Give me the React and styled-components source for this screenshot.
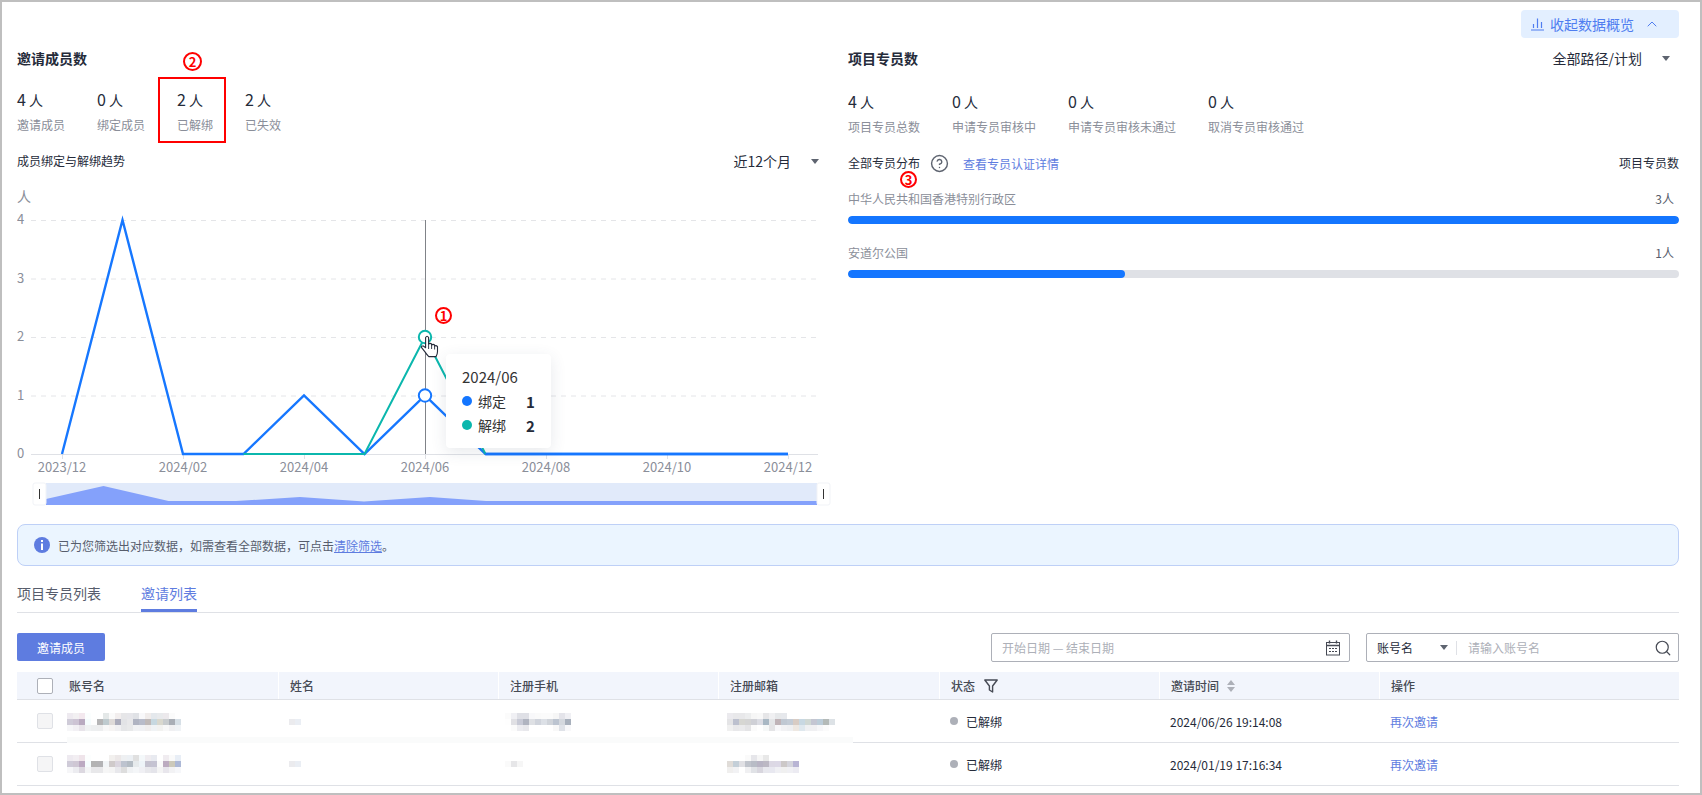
import React from "react";
import styled, { createGlobalStyle } from "styled-components";
import { ChevronUp, CircleHelp, Search } from "lucide-react";

const GlobalStyle = createGlobalStyle`
  html, body {
    margin: 0;
    padding: 0;
    background: #fff;
  }
  body {
    font-family: "Noto Sans CJK SC", "Liberation Sans", sans-serif;
    font-size: 12px;
    color: #252b3a;
  }
  * {
    box-sizing: border-box;
  }
`;

const Frame = styled.div`
  position: relative;
  width: 1702px;
  height: 795px;
  overflow: hidden;
  border: 2px solid #bfbfbf;
  padding: 8px 21px 0 15px;
  background: #fff;
`;

const TopBar = styled.div`
  display: flex;
  justify-content: flex-end;
`;

const CollapseButton = styled.button`
  display: flex;
  align-items: center;
  width: 158px;
  height: 28px;
  padding: 0 0 0 10px;
  border: 0;
  border-radius: 4px;
  background: #e3efff;
  color: #4f7df0;
  font: inherit;
  font-size: 14px;
  svg:first-child {
    margin-right: 6px;
  }
  svg:last-child {
    margin-left: 10px;
  }
`;

const Overview = styled.div`
  display: grid;
  grid-template-columns: 814px 831px;
  column-gap: 17px;
  margin-top: 9px;
  height: 463px;
`;

const Column = styled.section`
  min-width: 0;
`;

const HeadRow = styled.div`
  display: flex;
  justify-content: space-between;
  align-items: center;
  height: ${(p) => p.$h || 22}px;
  margin-top: ${(p) => p.$mt || 0}px;
`;

const Title = styled.h2`
  margin: 0;
  font-size: 14px;
  font-weight: 700;
  line-height: 22px;
  color: #252b3a;
`;

const SubTitle = styled.span`
  font-size: 12px;
  line-height: 18px;
  color: #252b3a;
`;

const Dropdown = styled.div`
  display: flex;
  align-items: center;
  padding-right: ${(p) => p.$pr}px;
  font-size: 14px;
  color: #252b3a;
`;

const Caret = styled.i`
  display: block;
  width: 0;
  height: 0;
  margin-left: ${(p) => p.$ml || 0}px;
  border-left: 4px solid transparent;
  border-right: 4px solid transparent;
  border-top: 5px solid #5e6470;
`;

const Stats = styled.div`
  display: flex;
  gap: 32px;
  margin-top: ${(p) => p.$mt}px;
`;

const Stat = styled.div`
  display: flex;
  flex-direction: column;
  gap: 5px;
`;

const StatValue = styled.div`
  display: flex;
  align-items: baseline;
  gap: 3px;
  height: 24px;
  line-height: 24px;
  font-size: 16px;
  color: #252b3a;
  span {
    font-size: 14px;
  }
`;

const StatLabel = styled.div`
  font-size: 12px;
  line-height: 18px;
  color: #8a8e99;
`;

const ChartWrap = styled.div`
  position: relative;
  width: 814px;
  height: 324px;
  margin-top: 16px;
  svg {
    display: block;
  }
`;

const Tip = styled.div`
  position: absolute;
  left: 429px;
  top: 168px;
  width: 105px;
  height: 94px;
  padding: 12px 0 0 16px;
  border-radius: 4px;
  background: #fff;
  box-shadow: 0 4px 16px rgba(60, 70, 100, 0.12);
  color: #333;
`;

const TipTitle = styled.div`
  font-size: 15px;
  line-height: 22px;
  margin-bottom: 1px;
`;

const TipRow = styled.div`
  display: flex;
  align-items: center;
  height: 24px;
  font-size: 14px;
  b {
    margin-left: 20px;
    font-size: 15px;
    font-weight: 700;
    color: #252b3a;
  }
`;

const Dot = styled.i`
  display: block;
  width: ${(p) => p.$size}px;
  height: ${(p) => p.$size}px;
  margin-right: ${(p) => p.$mr}px;
  border-radius: 50%;
  background: ${(p) => p.$color};
`;

const DistHead = styled.div`
  display: flex;
  align-items: center;
  justify-content: space-between;
  height: 18px;
  margin-top: 18px;
`;

const DistLeft = styled.div`
  display: flex;
  align-items: center;
  svg {
    margin: 0 14px 0 10px;
    color: #5e6470;
  }
`;

const TextLink = styled.a`
  font-size: 12px;
  color: #5e7ce0;
  text-decoration: none;
`;

const BarHead = styled.div`
  display: flex;
  justify-content: space-between;
  height: 18px;
  line-height: 18px;
  padding-right: 5px;
  margin-top: ${(p) => p.$mt}px;
  color: #8a8e99;
  span:last-child {
    color: #575d6c;
  }
`;

const Track = styled.div`
  height: 8px;
  margin-top: 8px;
  border-radius: 4px;
  overflow: hidden;
  background: #dfe1e6;
`;

const Fill = styled.div`
  height: 100%;
  border-radius: 4px;
  background: #1476ff;
`;

const Alert = styled.div`
  display: flex;
  align-items: center;
  height: 42px;
  margin-top: 14px;
  padding-left: 16px;
  border: 1px solid #bed0f7;
  border-radius: 8px;
  background: #ebf5ff;
  color: #575d6c;
  svg {
    margin-right: 8px;
  }
  a {
    color: #5e7ce0;
    text-decoration: underline;
  }
`;

const Tabs = styled.div`
  display: flex;
  gap: 40px;
  margin-top: 16px;
  border-bottom: 1px solid #dfe1e6;
`;

const Tab = styled.div`
  height: 30px;
  font-size: 14px;
  line-height: 22px;
  color: ${(p) => (p.$active ? "#5e7ce0" : "#575d6c")};
  border-bottom: 3px solid ${(p) => (p.$active ? "#5e7ce0" : "transparent")};
`;

const Toolbar = styled.div`
  display: flex;
  align-items: flex-start;
  height: 29px;
  margin-top: 20px;
`;

const PrimaryButton = styled.button`
  width: 88px;
  height: 28px;
  margin-right: auto;
  padding: 0;
  border: 0;
  border-radius: 2px;
  background: #5e7ce0;
  color: #fff;
  font: inherit;
  font-size: 12px;
`;

const Field = styled.div`
  display: flex;
  align-items: center;
  width: ${(p) => p.$w}px;
  height: 29px;
  margin-left: ${(p) => p.$ml || 0}px;
  padding: 0 8px 0 10px;
  border: 1px solid #adb0b8;
  border-radius: 2px;
  color: #adb0b8;
`;

const FieldText = styled.span`
  flex: ${(p) => (p.$grow ? 1 : "none")};
`;

const AccountSelect = styled.span`
  display: flex;
  align-items: center;
  width: 71px;
  color: #252b3a;
`;

const FieldDivider = styled.i`
  display: block;
  width: 1px;
  height: 14px;
  margin: 0 11px 0 8px;
  background: #dfe1e6;
`;

const SearchIcon = styled(Search)`
  margin-right: -2px;
  color: #464a54;
`;

const Table = styled.div`
  position: relative;
  margin-top: 10px;
`;

const Row = styled.div`
  display: grid;
  grid-template-columns: 261px 220px 220px 221px 220px 220px 300px;
  height: ${(p) => (p.$head ? 28 : 43)}px;
  border-bottom: 1px solid #dfe1e6;
  background: ${(p) => (p.$head ? "#f2f5fc" : "#fff")};
  color: ${(p) => (p.$head ? "#464a54" : "#252b3a")};
  font-weight: ${(p) => (p.$head ? 500 : 400)};
`;

const Cell = styled.div`
  display: flex;
  align-items: center;
  min-width: 0;
  padding-left: ${(p) => (p.$first ? 20 : 11)}px;
  border-left: ${(p) => (p.$head && !p.$first ? "1px solid #fff" : "0")};
`;

const Check = styled.i`
  display: block;
  flex: none;
  width: 16px;
  height: 16px;
  margin-right: 16px;
  border: 1px solid ${(p) => (p.$off ? "#dfe1e6" : "#adb0b8")};
  border-radius: 2px;
  background: ${(p) => (p.$off ? "#f5f5f6" : "#fff")};
`;

const Blur = styled.svg`
  display: block;
  flex: none;
  margin-left: ${(p) => p.$shift || 0}px;
  margin-top: ${(p) => (p.$low ? 2 : 0)}px;
`;

const HeadIcon = styled.svg`
  margin-left: ${(p) => p.$ml}px;
`;

const StatusDot = styled.i`
  display: block;
  width: 8px;
  height: 8px;
  margin-right: 8px;
  border-radius: 50%;
  background: #adb0b8;
`;

const ActionLink = styled.a`
  color: #5e7ce0;
  text-decoration: none;
`;

const Smear = styled.div`
  position: absolute;
  left: 50px;
  top: 65px;
  width: 786px;
  height: 6px;
  background: #fafbfb;
`;

const RedBox = styled.div`
  position: absolute;
  left: 156px;
  top: 75px;
  width: 68px;
  height: 66px;
  border: 2px solid #f00;
`;

const Mark = styled.span`
  position: absolute;
  left: ${(p) => p.$x}px;
  top: ${(p) => p.$y}px;
  display: flex;
  align-items: center;
  justify-content: center;
  width: ${(p) => p.$d}px;
  height: ${(p) => p.$d}px;
  border: 2px solid #f00;
  border-radius: 50%;
  color: #f00;
  font-size: 13px;
  font-weight: 700;
  line-height: 1;
`;

const xAt = (m) => 62 + m * 60.5;
const yAt = (v) => 454 - v * 58.5;
const toPoints = (vals, from = 0) =>
  vals.map((v, i) => `${xAt(i + from)},${yAt(v)}`).join(" ");

const bound = [0, 4, 0, 0, 1, 0, 1, 0, 0, 0, 0, 0, 0];
const unbound = [0, 0, 0, 2, 0];

function TrendChart() {
  return (
    <svg width="814" height="324" viewBox="17 186 814 324" fontFamily='"Noto Sans CJK SC", sans-serif'>
      <text x="17" y="202" fontSize="14" fill="#8a8e99">人</text>
      {[0, 1, 2, 3, 4].map((v) => (
        <g key={v}>
          <text x="17" y={yAt(v) + 4} fontSize="13" fill="#8a8e99">{v}</text>
          {v > 0 && (
            <line x1="31" x2="818" y1={yAt(v) + 0.5} y2={yAt(v) + 0.5} stroke="#e4e5e8" strokeDasharray="5 5" />
          )}
        </g>
      ))}
      <line x1="31" x2="818" y1="454.5" y2="454.5" stroke="#dfe1e6" />
      {[0, 2, 4, 6, 8, 10, 12].map((m, i) => (
        <g key={m}>
          <line x1={xAt(m) + 0.5} x2={xAt(m) + 0.5} y1="454" y2="459" stroke="#dfe1e6" />
          <text x={xAt(m)} y="472" fontSize="13" fill="#8a8e99" textAnchor="middle">
            {["2023/12", "2024/02", "2024/04", "2024/06", "2024/08", "2024/10", "2024/12"][i]}
          </text>
        </g>
      ))}
      <line x1="425.5" x2="425.5" y1="220" y2="454" stroke="#808388" />
      <polyline points={toPoints(bound)} fill="none" stroke="#1677ff" strokeWidth="2.4" strokeLinejoin="miter" />
      <polyline points={toPoints(unbound, 3)} fill="none" stroke="#0bb7ad" strokeWidth="2" />
      <polyline points={toPoints(bound.slice(7), 7)} fill="none" stroke="#1677ff" strokeWidth="2.6" />
      <circle cx="425" cy="337" r="6.2" fill="#fff" stroke="#0bb7ad" strokeWidth="2" />
      <circle cx="425" cy="395.5" r="6.2" fill="#fff" stroke="#1677ff" strokeWidth="2" />

      <rect x="46" y="483" width="771" height="22" fill="#e1eafa" />
      <polygon points="46,499 103.5,486 168.5,501 236,501 300,497 364,501.5 430,497 486,501 817,501 817,505 46,505" fill="#84a1fb" />
      <rect x="33" y="483" width="13" height="22" rx="2" fill="#fff" stroke="#f1f3f7" />
      <rect x="39" y="489" width="1" height="10" fill="#333" />
      <rect x="817" y="483" width="13" height="22" rx="2" fill="#fff" stroke="#f1f3f7" />
      <rect x="823" y="489" width="1" height="10" fill="#333" />

      <path
        d="M425.6 337.5q1.5-2.6 3 0v6.5q1.5-1.2 3 0v1q1.5-1.2 3 0v1q1.6-1 2.9.6v5q0 2.8-1.5 5h-7.2q-2-2-4-5l-3.2-4q-.5-2.2 2-1.5l2 1.6z"
        fill="#fff"
        stroke="#252b3a"
        strokeWidth="1.1"
        strokeLinejoin="round"
      />
      <path d="M428.6 344v5M431.6 345v4M434.6 346v3.5" stroke="#252b3a" strokeWidth="0.9" fill="none" />
    </svg>
  );
}

const BarChartIcon = () => (
  <svg width="13" height="14" viewBox="0 0 13 14" fill="none" stroke="#4f7df0" strokeWidth="1.2">
    <path d="M0 13h13M2.5 11V7M6.5 11V1.5M10.5 11V5" />
  </svg>
);

const InfoIcon = () => (
  <svg width="16" height="16" viewBox="0 0 16 16">
    <circle cx="8" cy="8" r="8" fill="#5e7ce0" />
    <rect x="7" y="3" width="2" height="2" fill="#fff" />
    <rect x="7" y="6.5" width="2" height="6.5" fill="#fff" />
  </svg>
);

const CalendarIcon = () => (
  <svg width="16" height="16" viewBox="0 0 16 16" fill="none" stroke="#464a54">
    <rect x="1.5" y="2.5" width="13" height="12.5" />
    <path d="M1.5 5.5h13M4.5 0.5v3M11.5 0.5v3" strokeWidth="1.4" />
    <path d="M4 8.5h2M7 8.5h2M10 8.5h2M4 11.5h2M7 11.5h2M10 11.5h2" strokeWidth="1.2" />
  </svg>
);

const FilterIcon = () => (
  <HeadIcon $ml={9} width="14" height="14" viewBox="0 0 14 14" fill="none" stroke="#464a54" strokeWidth="1.4">
    <path d="M0.8 1h12.4L8.6 7v6L5.4 11V7z" strokeLinejoin="round" />
  </HeadIcon>
);

const SortIcon = () => (
  <HeadIcon $ml={8} width="8" height="12" viewBox="0 0 8 12" fill="#adb0b8">
    <path d="M4 0l4 5H0zM4 12L0 7h8z" />
  </HeadIcon>
);

function Mosaic({ rows, shift, low }) {
  const w = rows[0].length * 6;
  return (
    <Blur $shift={shift} $low={low} width={w} height={rows.length * 6}>
      {rows.flatMap((row, r) =>
        row.map((c, i) => <rect key={`${r}-${i}`} x={i * 6} y={r * 6} width="6" height="6" fill={c} />)
      )}
    </Blur>
  );
}

const name1 = [
  ["#eeeaf0", "#f2f0f2", "#f3e8ee", "#fbfefe", "#fff", "#fff", "#e4e8e8", "#fafafa", "#f2eeee", "#e6e6e8", "#e6e6ea", "#e0e2e6", "#f8f8fa", "#f0eceb", "#e4e8ec", "#e8eaec", "#ece9ec", "#fbfbfb", "#fff"],
  ["#cfcbd8", "#cdc4d4", "#b9aac0", "#f5fcfd", "#fefefe", "#b5b5b6", "#bfcbcf", "#dedad8", "#abacbb", "#e2e3e6", "#e8e8ea", "#b0b4c2", "#b8bcca", "#bfb9b8", "#c7d8e0", "#d9d8ce", "#c8ccce", "#a9aeb6", "#d6dfe6"],
  ["#f6f6f8", "#f2f0f4", "#e8e4ea", "#f0f2f3", "#edeff0", "#edeeef", "#f8f8f8", "#f6f4f3", "#f0f0f2", "#e5e6e8", "#e8e9ea", "#f1f2f4", "#f0f1f4", "#f0eeee", "#f0f3f5", "#f2f2f0", "#f8f8f8", "#f0f0f2", "#f0f3f6"],
];
const name2 = [
  ["#eeeaf0", "#f2eef2", "#efe4ea", "#fcfefe", "#fff", "#fff", "#fff", "#f2f0ee", "#ece8e8", "#eef0f2", "#ecf0f4", "#e0e0e0", "#f4f8fa", "#efecf0", "#e8eaf0", "#fff", "#f0ecf0", "#fafafa", "#e8eef6"],
  ["#cfcbd8", "#cfc7d4", "#bcaac2", "#f6fdfe", "#b3b3b3", "#b3b3b5", "#f2f5f7", "#cfcaca", "#dad5de", "#bdc3cf", "#b4bcc4", "#e6eaec", "#eef4f8", "#c4c2cf", "#c5c3d2", "#fafafa", "#bcabc0", "#ccc9ba", "#acb8d6"],
  ["#f6f6f8", "#ececf0", "#dcd8e0", "#f4f5f6", "#e8e8ea", "#e8e8ea", "#f6f6f6", "#f4f4f4", "#e8e8ec", "#ddd", "#f0f2f4", "#f4f6f8", "#f0f0f4", "#e8e8ec", "#e4e4ea", "#f4f4f4", "#e8e6ec", "#f2f2f4", "#f6f7fa"],
];
const phone1 = [
  ["#fbfbfb", "#f0f0f4", "#dfe0e6", "#dfe0e6", "#f8f8fa", "#fafafa", "#fbfbfb", "#fbfbfb", "#f6f6f6", "#e4e4ea", "#f0f0f4"],
  ["#fefefe", "#e0e0e4", "#c8cad6", "#b0b4c0", "#dee0e4", "#d0d4dc", "#dce0e6", "#d0d4da", "#bcc4d0", "#d4d8de", "#a8b0bc"],
  ["#fff", "#fbfbfb", "#ececf0", "#e8e8ec", "#fff", "#fff", "#fff", "#fff", "#f8f8f8", "#dfe2e8", "#f8f8fa"],
];
const phone2 = [["#fafafa", "#e6e6e8", "#f6f6f6"]];
const email1 = [
  ["#ebeaee", "#e8e8ea", "#e8e8ea", "#ecedee", "#f6f6f6", "#f8f8f8", "#e6e6e8", "#f0f0f2", "#e6e8ea", "#e6e8ec", "#fff", "#fff", "#fff", "#fff", "#fff", "#fff", "#fff", "#fff"],
  ["#e4e4e6", "#bcc0ce", "#d6d6d2", "#d4d4d4", "#cfd0d6", "#dcdde4", "#a9b8c4", "#e4e6e8", "#c0b4b8", "#c0c8d2", "#c4ccd6", "#d8ccc4", "#c8d8e2", "#d0d8d4", "#c4c6d2", "#bcccd8", "#b4bab8", "#dde2e6"],
  ["#f0f0f0", "#e8e8ea", "#eaeaec", "#e4e4e6", "#fbfbfb", "#fff", "#f6f8f8", "#e4e4e6", "#f8f8fa", "#f2f2f4", "#eff0f2", "#eee8e2", "#dfe8ee", "#eff0f2", "#f0f0f2", "#f6f6f8", "#fbfbfb", "#fff"],
];
const email2 = [
  ["#fff", "#fff", "#fff", "#fafafa", "#e6e6ea", "#f6f6f6", "#e8e8e8", "#fff", "#fff", "#fff", "#fff", "#fff"],
  ["#e0dcd8", "#c4cfd8", "#e0e0e4", "#c0c4cc", "#b8bcc6", "#b8b4c4", "#bcb8c4", "#dcd8e4", "#dcd8e6", "#ccc8c8", "#d4d4dc", "#b8b4d4"],
  ["#f0efee", "#f2f2f4", "#fff", "#f0f0f2", "#e0e2e6", "#d8d6de", "#e8e8ee", "#e8e8f0", "#f0f0f4", "#f0f0f0", "#f0f0f4", "#ecebf2"],
];
const shortName = [["#ebebee", "#eaeef4"]];

const memberStats = [
  ["4", "邀请成员"],
  ["0", "绑定成员"],
  ["2", "已解绑"],
  ["2", "已失效"],
];
const agentStats = [
  ["4", "项目专员总数"],
  ["0", "申请专员审核中"],
  ["0", "申请专员审核未通过"],
  ["0", "取消专员审核通过"],
];
const regions = [
  { name: "中华人民共和国香港特别行政区", count: 3, mt: 18 },
  { name: "安道尔公国", count: 1, mt: 20 },
];
const invites = [
  { name: name1, phone: phone1, email: email1, time: "2024/06/26 19:14:08", low: true },
  { name: name2, phone: phone2, email: email2, time: "2024/01/19 17:16:34" },
];

function StatList({ items, mt }) {
  return (
    <Stats $mt={mt}>
      {items.map(([value, label]) => (
        <Stat key={label}>
          <StatValue>
            {value}
            <span>人</span>
          </StatValue>
          <StatLabel>{label}</StatLabel>
        </Stat>
      ))}
    </Stats>
  );
}

export default function App() {
  return (
    <>
      <GlobalStyle />
      <Frame>
        <TopBar>
          <CollapseButton>
            <BarChartIcon />
            收起数据概览
            <ChevronUp size={16} strokeWidth={1.5} />
          </CollapseButton>
        </TopBar>

        <Overview>
          <Column>
            <Title>邀请成员数</Title>
            <StatList items={memberStats} mt={18} />
            <HeadRow $h={18} $mt={18}>
              <SubTitle>成员绑定与解绑趋势</SubTitle>
              <Dropdown $pr={12}>
                近12个月
                <Caret $ml={20} />
              </Dropdown>
            </HeadRow>
            <ChartWrap>
              <TrendChart />
              <Tip>
                <TipTitle>2024/06</TipTitle>
                <TipRow>
                  <Dot $size={10} $color="#1476ff" $mr={6} />
                  绑定
                  <b>1</b>
                </TipRow>
                <TipRow>
                  <Dot $size={10} $color="#0bb7ad" $mr={6} />
                  解绑
                  <b>2</b>
                </TipRow>
              </Tip>
            </ChartWrap>
          </Column>

          <Column>
            <HeadRow>
              <Title>项目专员数</Title>
              <Dropdown $pr={9}>
                全部路径/计划
                <Caret $ml={20} />
              </Dropdown>
            </HeadRow>
            <StatList items={agentStats} mt={20} />
            <DistHead>
              <DistLeft>
                <SubTitle>全部专员分布</SubTitle>
                <CircleHelp size={19} strokeWidth={1.8} />
                <TextLink>查看专员认证详情</TextLink>
              </DistLeft>
              <SubTitle>项目专员数</SubTitle>
            </DistHead>
            {regions.map((r) => (
              <div key={r.name}>
                <BarHead $mt={r.mt}>
                  <span>{r.name}</span>
                  <span>{r.count}人</span>
                </BarHead>
                <Track>
                  <Fill style={{ width: `${(r.count / 3) * 100}%` }} />
                </Track>
              </div>
            ))}
          </Column>
        </Overview>

        <Alert>
          <InfoIcon />
          <span>
            已为您筛选出对应数据，如需查看全部数据，可点击<a>清除筛选</a>。
          </span>
        </Alert>

        <Tabs>
          <Tab>项目专员列表</Tab>
          <Tab $active>邀请列表</Tab>
        </Tabs>

        <Toolbar>
          <PrimaryButton>邀请成员</PrimaryButton>
          <Field $w={359}>
            <FieldText $grow>开始日期 — 结束日期</FieldText>
            <CalendarIcon />
          </Field>
          <Field $w={313} $ml={16}>
            <AccountSelect>
              <FieldText $grow>账号名</FieldText>
              <Caret />
            </AccountSelect>
            <FieldDivider />
            <FieldText $grow>请输入账号名</FieldText>
            <SearchIcon size={18} strokeWidth={1.6} />
          </Field>
        </Toolbar>

        <Table>
          <Row $head>
            <Cell $head $first>
              <Check />
              账号名
            </Cell>
            <Cell $head>姓名</Cell>
            <Cell $head>注册手机</Cell>
            <Cell $head>注册邮箱</Cell>
            <Cell $head>
              状态
              <FilterIcon />
            </Cell>
            <Cell $head>
              邀请时间
              <SortIcon />
            </Cell>
            <Cell $head>操作</Cell>
          </Row>
          {invites.map((row) => (
            <Row key={row.time}>
              <Cell $first>
                <Check $off />
                <Mosaic rows={row.name} shift={-2} low={row.low} />
              </Cell>
              <Cell>
                <Mosaic rows={shortName} low={row.low} />
              </Cell>
              <Cell>
                <Mosaic rows={row.phone} shift={-4} low={row.low} />
              </Cell>
              <Cell>
                <Mosaic rows={row.email} shift={-2} low={row.low} />
              </Cell>
              <Cell>
                <StatusDot />
                已解绑
              </Cell>
              <Cell>{row.time}</Cell>
              <Cell>
                <ActionLink>再次邀请</ActionLink>
              </Cell>
            </Row>
          ))}
          <Smear />
        </Table>

        <RedBox />
        <Mark $x={181} $y={50} $d={19}>2</Mark>
        <Mark $x={433} $y={305} $d={17}>1</Mark>
        <Mark $x={898} $y={169} $d={17}>3</Mark>
      </Frame>
    </>
  );
}
